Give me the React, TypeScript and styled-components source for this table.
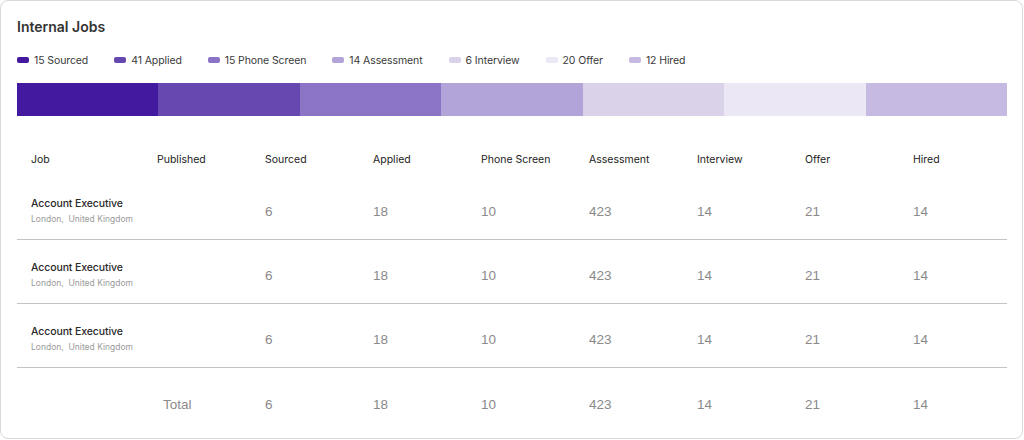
import React from "react";
import styled, { createGlobalStyle } from "styled-components";

const GlobalStyle = createGlobalStyle`
  * { box-sizing: border-box; }
  body { margin: 0; background: #ffffff; font-family: "Inter", "Open Sans", sans-serif; }
`;

const stages = [
    { label: `Sourced`, count: 15, color: `#43199f` },
    { label: `Applied`, count: 41, color: `#6748b0` },
    { label: `Phone Screen`, count: 15, color: `#8b74c5` },
    { label: `Assessment`, count: 14, color: `#b2a3d8` },
    { label: `Interview`, count: 6, color: `#d9d2e9` },
    { label: `Offer`, count: 20, color: `#ebe7f5` },
    { label: `Hired`, count: 12, color: `#c6b9e2` },
];

const jobs = [
    { title: `Account Executive`, city: `London`, country: `United Kingdom`, values: [6, 18, 10, 423, 14, 21, 14] },
    { title: `Account Executive`, city: `London`, country: `United Kingdom`, values: [6, 18, 10, 423, 14, 21, 14] },
    { title: `Account Executive`, city: `London`, country: `United Kingdom`, values: [6, 18, 10, 423, 14, 21, 14] },
];

const totals = [6, 18, 10, 423, 14, 21, 14];

const Card = styled.div`width: 1023px; height: 439px; border: 1px solid #d9d9d9; border-radius: 8px; padding: 17px 16px 0 16px; background: #fff;`;
const Title = styled.h2`margin: 0; font-size: 14px; line-height: 18px; font-weight: 600; color: #333;`;

const Legend = styled.div`display: flex; gap: 26px; margin-top: 17px; height: 14px; align-items: center;`;
const LegendItem = styled.div`display: flex; align-items: center; gap: 5px; font-size: 10.5px; letter-spacing: -0.1px; color: #3a3a3a;`;
const Swatch = styled.span<{ $color: string }>`width: 12px; height: 6px; border-radius: 2px; background: ${p => p.$color};`;

const Bar = styled.div`display: flex; height: 33px; margin-top: 16px; width: 990px;`;
const Segment = styled.div<{ $color: string }>`flex: 1; background: ${p => p.$color};`;

const Table = styled.div`width: 990px;`;
const Row = styled.div<{ $line?: boolean }>`display: grid; grid-template-columns: 126px repeat(8, 108px); height: 64px; padding-top: 8px; align-items: center; border-bottom: ${p => p.$line ? `1px solid #c4c4c4` : `none`};`;
const HeadRow = styled(Row)`height: 60px; padding-top: 26px;`;
const HeadCell = styled.div`padding-left: 14px; font-size: 10.5px; font-weight: 400; color: #222;`;

const JobCell = styled.div`padding-left: 14px; display: flex; flex-direction: column; gap: 4px; margin-top: -2px;`;
const JobTitle = styled.span`font-size: 10.5px; font-weight: 500; letter-spacing: -0.1px; color: #2a2a2a;`;
const JobPlace = styled.span`font-size: 8.5px; color: #9a9a9a;`;

const Value = styled.div`padding-left: 14px; font-family: "Liberation Sans", Arial, sans-serif; font-size: 13.5px; color: #8a8a8a;`;
const TotalLabel = styled(Value)`padding-left: 20px;`;

const App = () => {
    return (
        <>
            <GlobalStyle />
            <Card>
                <Title>Internal Jobs</Title>

                <Legend>
                    {
                        stages.map(stage =>
                            <LegendItem key={stage.label}>
                                <Swatch $color={stage.color} />
                                {stage.count} {stage.label}
                            </LegendItem>
                        )
                    }
                </Legend>

                <Bar>
                    {stages.map(stage => <Segment key={stage.label} $color={stage.color} />)}
                </Bar>

                <Table>
                    <HeadRow>
                        <HeadCell>Job</HeadCell>
                        <HeadCell>Published</HeadCell>
                        {stages.map(stage => <HeadCell key={stage.label}>{stage.label}</HeadCell>)}
                    </HeadRow>

                    {
                        jobs.map((job, i) =>
                            <Row key={i} $line>
                                <JobCell>
                                    <JobTitle>{job.title}</JobTitle>
                                    <JobPlace>{job.city},&nbsp; {job.country}</JobPlace>
                                </JobCell>
                                <div />
                                {job.values.map((v, j) => <Value key={j}>{v}</Value>)}
                            </Row>
                        )
                    }

                    <Row>
                        <div />
                        <TotalLabel>Total</TotalLabel>
                        {totals.map((v, j) => <Value key={j}>{v}</Value>)}
                    </Row>
                </Table>
            </Card>
        </>
    );
};

export default App;
